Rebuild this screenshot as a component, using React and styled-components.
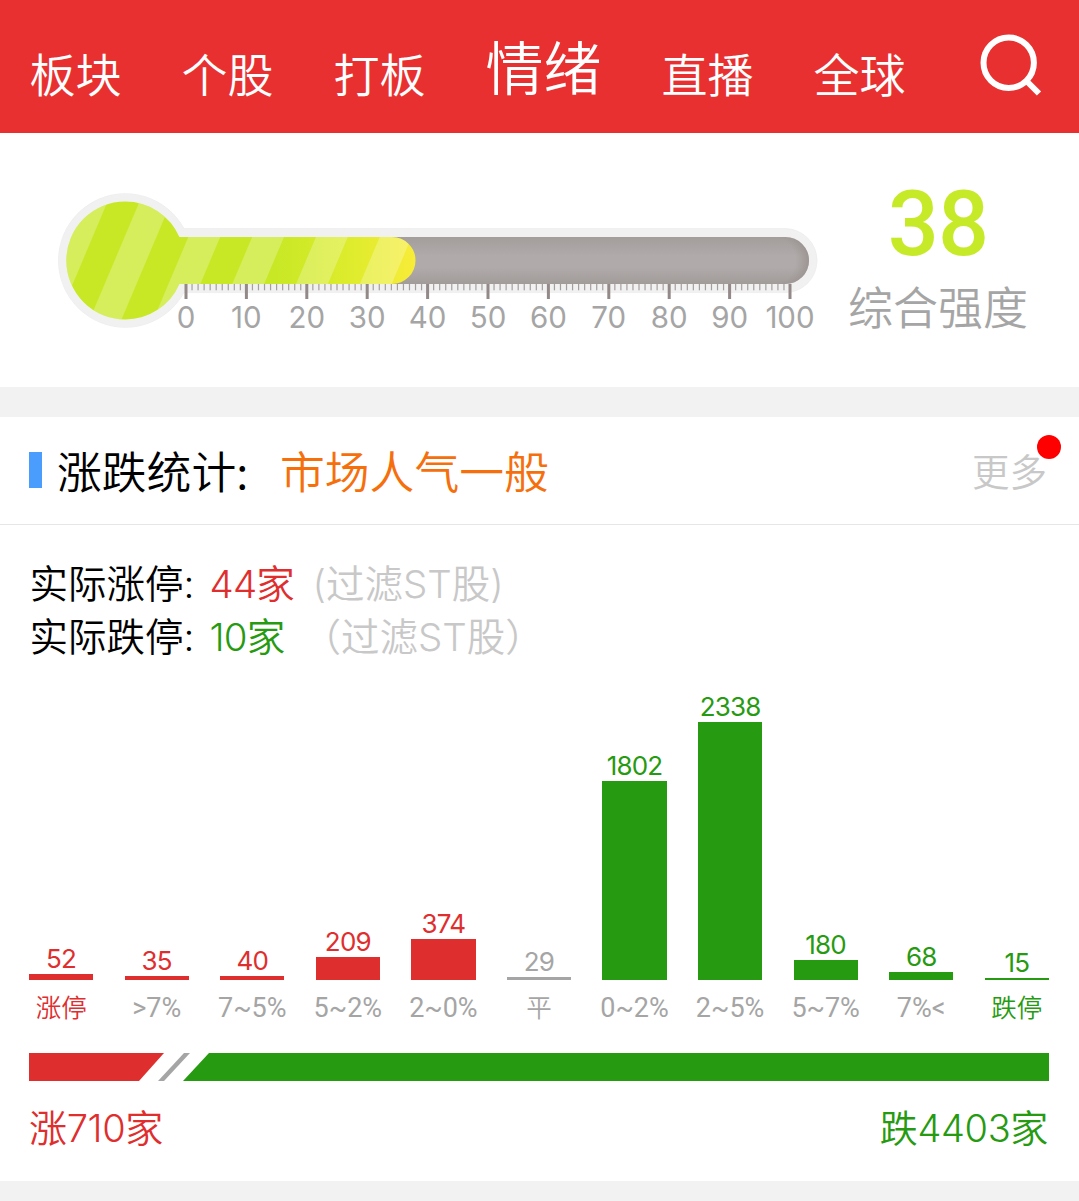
import styled, { createGlobalStyle } from 'styled-components';

const RED = '#df2e2e';
const GREEN = '#269a10';
const GRAY = '#a5a5a5';

const GlobalStyle = createGlobalStyle`
  * {
    box-sizing: border-box;
  }
  body {
    margin: 0;
    background: #fff;
    color: #000;
    font-family: Inter, 'Noto Sans CJK SC', sans-serif;
    font-weight: 350;
  }
`;

const Page = styled.div`
  width: 1079px;
  height: 1201px;
  overflow: hidden;
  display: flex;
  flex-direction: column;
`;

const Nav = styled.nav`
  height: 133px;
  flex: none;
  background: #e93030;
  padding: 0 37px 0 29.5px;
  display: flex;
  align-items: flex-start;
  justify-content: space-between;
`;

const Tabs = styled.div`
  display: flex;
  gap: 60px;
`;

const Tab = styled.a`
  color: #fff;
  font-family: 'Noto Sans CJK SC', sans-serif;
  font-size: ${({ $active }) => ($active ? '58px' : '46px')};
  line-height: 60px;
  padding-top: ${({ $active }) => ($active ? '35px' : '42px')};
  white-space: nowrap;
`;

const SearchIcon = styled.svg`
  width: 64px;
  height: 64px;
  margin-top: 33px;
`;

const Strength = styled.section`
  height: 254px;
  flex: none;
  display: flex;
`;

const Gauge = styled.svg`
  width: 840px;
  height: 254px;
  flex: none;
`;

const Score = styled.div`
  width: 196px;
  padding-top: 44px;
  display: flex;
  flex-direction: column;
  align-items: center;
`;

const ScoreValue = styled.div`
  color: #c6ea28;
  font-family: Roboto, sans-serif;
  font-size: 90px;
  font-weight: 500;
  line-height: 96px;
  letter-spacing: -1px;
`;

const ScoreLabel = styled.div`
  color: ${GRAY};
  font-family: 'Noto Sans CJK SC', sans-serif;
  font-size: 45px;
  line-height: 66px;
`;

const Divider = styled.div`
  height: 30px;
  flex: none;
  background: #f2f2f2;
`;

const SectionHeader = styled.header`
  height: 108px;
  flex: none;
  padding: 0 32px 2px 29px;
  display: flex;
  align-items: center;
  border-bottom: 1px solid #e6e6e6;
  font-family: 'Noto Sans CJK SC', sans-serif;
  font-size: 44.8px;
`;

const Marker = styled.span`
  width: 13px;
  height: 36px;
  margin-right: 15px;
  background: #4a9cfd;
`;

const Title = styled.h2`
  width: 223px;
  margin: 0;
  font: inherit;
`;

const Mood = styled.span`
  color: #f56f0c;
`;

const More = styled.a`
  position: relative;
  margin-left: auto;
  color: #c8c8c8;
  font-size: 37.5px;
`;

const Dot = styled.i`
  position: absolute;
  top: -7px;
  right: -14px;
  width: 24px;
  height: 24px;
  border-radius: 50%;
  background: #f00;
`;

const Limits = styled.div`
  padding: 33px 0 0 29.5px;
  height: 147px;
  flex: none;
`;

const LimitRow = styled.div`
  display: flex;
  height: 53px;
  line-height: 53px;
  font-size: 38.5px;
  white-space: pre;
`;

const LimitName = styled.span`
  width: 180px;
`;

const LimitCount = styled.span`
  color: ${({ $color }) => $color};
  width: ${({ $width }) => $width};
  letter-spacing: -0.8px;
`;

const LimitNote = styled.span`
  color: #c8c8c8;
`;

const Chart = styled.div`
  height: 365px;
  flex: none;
  padding: 0 30px 0 29px;
  display: flex;
  justify-content: space-between;
  align-items: flex-end;
`;

const Column = styled.div`
  width: 64.3px;
  display: flex;
  flex-direction: column;
  align-items: center;
  color: ${({ $color }) => $color};
  white-space: nowrap;
`;

const Value = styled.span`
  font-size: 26px;
  font-weight: 400;
  line-height: 31px;
  letter-spacing: -0.8px;
`;

const Bar = styled.div`
  width: 100%;
  background: currentColor;
`;

const Label = styled.span`
  height: 57px;
  line-height: 57px;
  font-family: Roboto, 'Noto Sans CJK SC', sans-serif;
  font-size: ${({ $cjk }) => ($cjk ? '25.5px' : '27px')};
  font-weight: ${({ $cjk }) => ($cjk ? 350 : 400)};
  color: ${({ $color }) => $color};
`;

const Ratio = styled.div`
  height: 28px;
  flex: none;
  margin: 16px 30px 0 29px;
  display: flex;
`;

const Rise = styled.div`
  width: 135px;
  background: ${RED};
  clip-path: polygon(0 0, 100% 0, 110px 100%, 0 100%);
`;

const Slash = styled.div`
  width: 32px;
  margin: 0 -7px 0 -6px;
  background: ${GRAY};
  clip-path: polygon(26px 0, 100% 0, 6px 100%, 0 100%);
`;

const Fall = styled.div`
  flex: 1;
  background: ${GREEN};
  clip-path: polygon(26px 0, 100% 0, 100% 100%, 0 100%);
`;

const Totals = styled.div`
  height: 100px;
  flex: none;
  padding: 20px 31px 0 29px;
  display: flex;
  justify-content: space-between;
  font-size: 38px;
  line-height: 54px;
`;

const Total = styled.span`
  color: ${({ $color }) => $color};
  letter-spacing: -0.35px;
`;

const limits = [
  { name: '实际涨停:', count: '44家', color: RED, width: '103px', note: '(过滤ST股)' },
  { name: '实际跌停:', count: '10家', color: GREEN, width: '93px', note: '（过滤ST股）' },
];

const columns = [
  { label: '涨停', value: 52, color: RED, cjk: true, own: true },
  { label: '>7%', value: 35, color: RED },
  { label: '7~5%', value: 40, color: RED },
  { label: '5~2%', value: 209, color: RED },
  { label: '2~0%', value: 374, color: RED },
  { label: '平', value: 29, color: GRAY, cjk: true },
  { label: '0~2%', value: 1802, color: GREEN },
  { label: '2~5%', value: 2338, color: GREEN },
  { label: '5~7%', value: 180, color: GREEN },
  { label: '7%<', value: 68, color: GREEN },
  { label: '跌停', value: 15, color: GREEN, cjk: true, own: true },
];

const PX_PER_STOCK = 258.5 / 2338;
const ZERO_X = 186;
const STEP = 6.04;

function Thermometer({ value }) {
  const end = ZERO_X + value * STEP;
  const ticks = Array.from({ length: 101 }, (_, i) => i);
  const stripes = [0, 1, 2, 3, 4, 5].map((i) => 60.7 + i * 63.8);

  return (
    <Gauge viewBox="0 133 840 254">
      <defs>
        <linearGradient id="track" x1="0" y1="0" x2="0" y2="1">
          <stop offset="0" stopColor="#a39d9c" />
          <stop offset="0.4" stopColor="#b0abaa" />
          <stop offset="0.65" stopColor="#b0abaa" />
          <stop offset="1" stopColor="#a19b9a" />
        </linearGradient>
        <radialGradient id="trackEnd" gradientUnits="userSpaceOnUse" cx="772" cy="260.5" r="38">
          <stop offset="0.62" stopColor="#978f8e" stopOpacity="0" />
          <stop offset="1" stopColor="#978f8e" stopOpacity="0.85" />
        </radialGradient>
        <linearGradient id="fill" gradientUnits="userSpaceOnUse" x1="66" y1="0" x2={end} y2="0">
          <stop offset="0.6" stopColor="#c8e825" />
          <stop offset="0.8" stopColor="#dcec2c" />
          <stop offset="1" stopColor="#f8ec38" />
        </linearGradient>
        <clipPath id="liquid">
          <circle cx="125.3" cy="260.5" r="59" />
          <path d={`M150 237H${end - 23.5}a23.5 23.5 0 0 1 0 47H150z`} />
        </clipPath>
        <clipPath id="cap">
          <path d="M150 237H785.5a23.5 23.5 0 0 1 0 47H150z" />
        </clipPath>
      </defs>
      <g fill="#f1f1f1" stroke="#ececec" strokeWidth="0.8">
        <circle cx="125.3" cy="260.5" r="66.8" />
        <path d="M150 228.6H785a32 32 0 0 1 0 64H150" />
      </g>
      <circle cx="125.3" cy="260.5" r="66.4" fill="#f1f1f1" />
      <g clipPath="url(#cap)">
        <rect x="150" y="237" width="660" height="47" fill="url(#track)" />
        <rect x="772" y="237" width="38" height="47" fill="url(#trackEnd)" />
      </g>
      <g clipPath="url(#liquid)">
        <rect x="60" y="195" width="370" height="130" fill="url(#fill)" />
        {stripes.map((x) => (
          <polygon
            key={x}
            points={`${x + 17.8},195 ${x + 49.7},195 ${x - 5.3},325 ${x - 37.2},325`}
            fill="#fff"
            fillOpacity="0.25"
          />
        ))}
      </g>
      {ticks.map((i) => (
        <rect
          key={i}
          x={ZERO_X + i * STEP - (i % 10 ? 0.6 : 1.5)}
          y="284"
          width={i % 10 ? 1.2 : 3}
          height={i % 10 ? 6.3 : 15}
          fill="#938988"
          fillOpacity={i % 10 ? 0.8 : 1}
        />
      ))}
      {ticks.filter((i) => i % 10 === 0).map((i) => (
        <text
          key={i}
          x={ZERO_X + i * STEP}
          y="327.6"
          fontSize="29.5"
          fontWeight="400"
          textAnchor="middle"
          fill={GRAY}
        >
          {i}
        </text>
      ))}
    </Gauge>
  );
}

export default function App() {
  return (
    <Page>
      <GlobalStyle />
      <Nav>
        <Tabs>
          {['板块', '个股', '打板', '情绪', '直播', '全球'].map((name) => (
            <Tab key={name} $active={name === '情绪'}>{name}</Tab>
          ))}
        </Tabs>
        <SearchIcon viewBox="978 33 64 64" fill="none" stroke="#fff" strokeWidth="6">
          <circle cx="1008.7" cy="62.8" r="25.2" />
          <path d="M1027 81.5L1039 93.5" />
        </SearchIcon>
      </Nav>

      <Strength>
        <Thermometer value={38} />
        <Score>
          <ScoreValue>38</ScoreValue>
          <ScoreLabel>综合强度</ScoreLabel>
        </Score>
      </Strength>

      <Divider />

      <SectionHeader>
        <Marker />
        <Title>涨跌统计:</Title>
        <Mood>市场人气一般</Mood>
        <More>
          更多
          <Dot />
        </More>
      </SectionHeader>

      <Limits>
        {limits.map((row) => (
          <LimitRow key={row.name}>
            <LimitName>{row.name}</LimitName>
            <LimitCount $color={row.color} $width={row.width}>{row.count}</LimitCount>
            <LimitNote>{row.note}</LimitNote>
          </LimitRow>
        ))}
      </Limits>

      <Chart>
        {columns.map((col) => (
          <Column key={col.label} $color={col.color}>
            <Value>{col.value}</Value>
            <Bar style={{ height: col.value * PX_PER_STOCK }} />
            <Label $cjk={col.cjk} $color={col.own ? col.color : GRAY}>{col.label}</Label>
          </Column>
        ))}
      </Chart>

      <Ratio>
        <Rise />
        <Slash />
        <Fall />
      </Ratio>

      <Totals>
        <Total $color={RED}>涨710家</Total>
        <Total $color={GREEN}>跌4403家</Total>
      </Totals>

      <Divider />
    </Page>
  );
}
